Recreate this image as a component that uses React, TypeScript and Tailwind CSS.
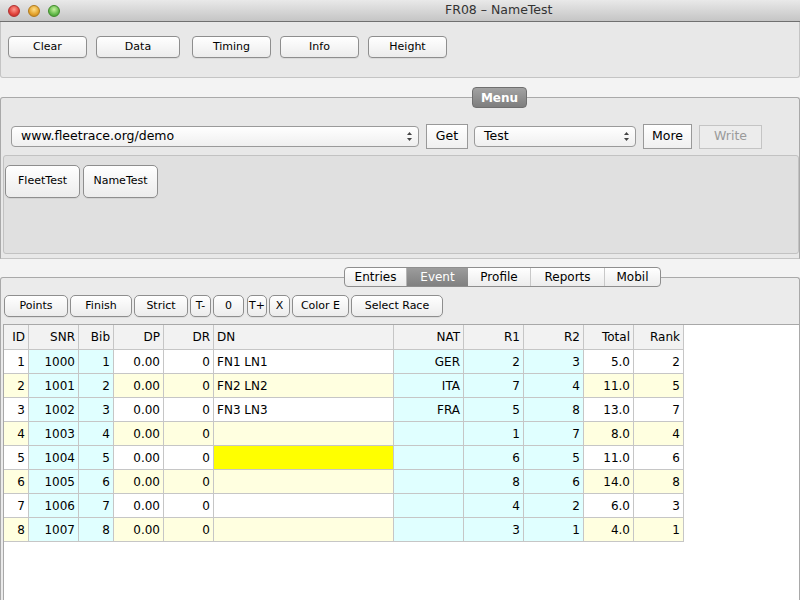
import { ReactNode } from "react";

const font = "font-['DejaVu_Sans',sans-serif]";

const rows: (string | number)[][] = [
  [1, 1000, 1, "0.00", 0, "FN1 LN1", "GER", 2, 3, "5.0", 2],
  [2, 1001, 2, "0.00", 0, "FN2 LN2", "ITA", 7, 4, "11.0", 5],
  [3, 1002, 3, "0.00", 0, "FN3 LN3", "FRA", 5, 8, "13.0", 7],
  [4, 1003, 4, "0.00", 0, "", "", 1, 7, "8.0", 4],
  [5, 1004, 5, "0.00", 0, "", "", 6, 5, "11.0", 6],
  [6, 1005, 6, "0.00", 0, "", "", 8, 6, "14.0", 8],
  [7, 1006, 7, "0.00", 0, "", "", 4, 2, "6.0", 3],
  [8, 1007, 8, "0.00", 0, "", "", 3, 1, "4.0", 1],
];

const headers = ["ID", "SNR", "Bib", "DP", "DR", "DN", "NAT", "R1", "R2", "Total", "Rank"];
const cyanCols = [1, 2, 6, 7, 8];

function cellBg(row: number, col: number) {
  if (col === 5 && row === 4) return "bg-[#ffff00]";
  if (cyanCols.includes(col)) return "bg-[#e0ffff]";
  return row % 2 === 1 ? "bg-[#ffffe0]" : "bg-white";
}

function Btn({ children, className = "" }: { children: ReactNode; className?: string }) {
  return (
    <div
      className={`flex items-center justify-center rounded-[4px] border border-[#8e8e8e] bg-gradient-to-b from-white to-[#ececec] text-[11px] text-black shadow-[0_1px_0_rgba(0,0,0,0.06)] ${className}`}
    >
      {children}
    </div>
  );
}

function Combo({ text, className = "" }: { text: string; className?: string }) {
  return (
    <div
      className={`flex h-[21px] items-center justify-between rounded-[4px] border border-[#9a9a9a] bg-gradient-to-b from-white to-[#efefef] pl-[9px] pr-[5px] text-[12.5px] text-black ${className}`}
    >
      <span>{text}</span>
      <svg width="7" height="11" viewBox="0 0 7 11">
        <path d="M3.5 1 L6 4 L1 4 Z" fill="#444" />
        <path d="M3.5 10 L6 7 L1 7 Z" fill="#444" />
      </svg>
    </div>
  );
}

export default function App() {
  return (
    <div className={`flex h-[600px] w-[800px] flex-col overflow-hidden bg-[#f3f3f3] ${font}`}>
      {/* Title bar */}
      <div className="flex h-[22px] shrink-0 items-center border-b border-[#707070] bg-gradient-to-b from-[#e9e9e9] to-[#c5c5c5] pl-[8px]">
        <div className="flex gap-[8px]">
          <span className="h-[12px] w-[12px] rounded-full border border-[#b03030] bg-[radial-gradient(circle_at_50%_35%,#ff9a90,#e0413a_60%,#b52a24)]" />
          <span className="h-[12px] w-[12px] rounded-full border border-[#b07a1c] bg-[radial-gradient(circle_at_50%_35%,#ffe08a,#e3a22c_60%,#b9781a)]" />
          <span className="h-[12px] w-[12px] rounded-full border border-[#3f8a2a] bg-[radial-gradient(circle_at_50%_35%,#c8f2a0,#62b94a_60%,#3f8d2c)]" />
        </div>
        <span className="ml-[385px] text-[12.5px] text-[#333]">FR08 – NameTest</span>
      </div>

      {/* Top buttons */}
      <div className="flex h-[56px] shrink-0 gap-[9px] rounded-b-[3px] border border-t-0 border-[#c4c4c4] bg-[#e8e8e8] pl-[7px] pt-[14px]">
        <Btn className="h-[22px] w-[79px]">Clear</Btn>
        <Btn className="h-[22px] w-[84px]">Data</Btn>
        <Btn className="ml-[3px] h-[22px] w-[79px]">Timing</Btn>
        <Btn className="h-[22px] w-[79px]">Info</Btn>
        <Btn className="h-[22px] w-[79px]">Height</Btn>
      </div>

      {/* Menu group */}
      <div className="relative mt-[19px] flex h-[162px] shrink-0 flex-col rounded-t-[3px] border border-[#a9a9a9] border-b-[#c4c4c4] bg-[#e8e8e8]">
        <div className="absolute left-[471px] top-[-11px] flex h-[21px] w-[55px] items-center justify-center rounded-[4px] border border-[#6f6f6f] bg-gradient-to-b from-[#a2a2a2] to-[#7e7e7e] text-[12px] font-bold text-white">
          Menu
        </div>
        <div className="mt-[26px] flex items-center pl-[10px]">
          <Combo text="www.fleetrace.org/demo" className="w-[408px]" />
          <div className="ml-[7px] flex h-[25px] w-[42px] items-center justify-center border border-[#999] bg-gradient-to-b from-white to-[#f0f0f0] text-[12.5px]">
            Get
          </div>
          <Combo text="Test" className="ml-[6px] w-[162px]" />
          <div className="ml-[7px] flex h-[25px] w-[49px] items-center justify-center border border-[#999] bg-gradient-to-b from-white to-[#f0f0f0] text-[12.5px]">
            More
          </div>
          <div className="ml-[7px] flex h-[24px] w-[63px] items-center justify-center border border-[#c4c4c4] bg-[#ececec] text-[12.5px] text-[#9a9a9a]">
            Write
          </div>
        </div>
        <div className="ml-[2px] mt-[6px] flex h-[99px] gap-[3px] rounded-[3px] border border-[#c2c2c2] bg-[#e0e0e0] pl-[1px] pt-[9px]">
          <Btn className="h-[33px] w-[75px] rounded-[5px]">FleetTest</Btn>
          <Btn className="h-[33px] w-[75px] rounded-[5px]">NameTest</Btn>
        </div>
      </div>

      {/* Lower panel */}
      <div className="relative mt-[18px] flex flex-1 flex-col rounded-t-[3px] border border-b-0 border-[#a9a9a9] bg-[#ebebeb]">
        <div className="absolute left-[343px] top-[-11px] flex h-[20px] overflow-hidden rounded-[4px] border border-[#8e8e8e] bg-gradient-to-b from-white to-[#ececec] text-[12px]">
          <div className="flex w-[62px] items-center justify-center border-r border-[#b5b5b5]">Entries</div>
          <div className="flex w-[61px] items-center justify-center bg-gradient-to-b from-[#9c9c9c] to-[#808080] text-white">
            Event
          </div>
          <div className="flex w-[63px] items-center justify-center border-r border-[#c8c8c8]">Profile</div>
          <div className="flex w-[74px] items-center justify-center border-r border-[#c8c8c8]">Reports</div>
          <div className="flex w-[55px] items-center justify-center">Mobil</div>
        </div>

        <div className="mt-[17px] flex gap-[2px] pl-[3px]">
          <Btn className="h-[22px] w-[64px] rounded-[5px]">Points</Btn>
          <Btn className="h-[22px] w-[62px] rounded-[5px]">Finish</Btn>
          <Btn className="h-[22px] w-[54px] rounded-[5px]">Strict</Btn>
          <Btn className="h-[22px] w-[21px] rounded-[5px]">T-</Btn>
          <Btn className="h-[22px] w-[31px] rounded-[5px]">0</Btn>
          <Btn className="ml-[1px] h-[22px] w-[20px] rounded-[5px]">T+</Btn>
          <Btn className="h-[22px] w-[21px] rounded-[5px]">X</Btn>
          <Btn className="h-[22px] w-[57px] rounded-[5px]">Color E</Btn>
          <Btn className="h-[22px] w-[92px] rounded-[5px]">Select Race</Btn>
        </div>

        {/* Table */}
        <div className="ml-[2px] mt-[7px] flex-1 border-l border-t border-[#a8a8a8] bg-white text-[12px] text-black">
          <div className="grid w-fit grid-cols-[25px_50px_35px_50px_50px_180px_70px_60px_60px_50px_50px]">
            {headers.map((h, c) => (
              <div
                key={h}
                className={`flex h-[25px] items-center border-b border-r border-[#c6c6c6] bg-[#f2f2f2] px-[3px] ${c === 5 ? "justify-start" : "justify-end"}`}
              >
                {h}
              </div>
            ))}
            {rows.map((r, i) =>
              r.map((v, c) => (
                <div
                  key={`${i}-${c}`}
                  className={`flex h-[24px] items-center border-b border-r border-[#c6c6c6] px-[3px] ${cellBg(i, c)} ${c === 5 ? "justify-start" : "justify-end"}`}
                >
                  {v}
                </div>
              ))
            )}
          </div>
        </div>
      </div>
    </div>
  );
}
